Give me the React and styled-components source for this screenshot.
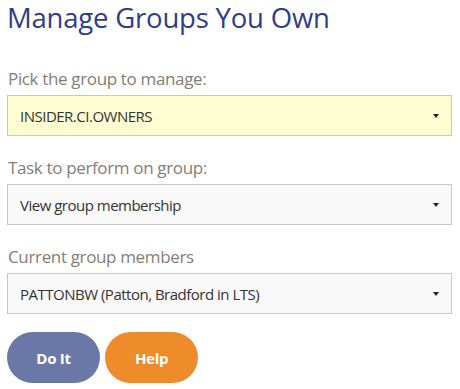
import React from 'react';
import styled, { createGlobalStyle } from 'styled-components';

const GlobalStyle = createGlobalStyle`
  body {
    margin: 0;
    background: #ffffff;
    font-family: "Open Sans", "Liberation Sans", sans-serif;
  }
`;

const Page = styled.div`
  padding: 0 8px 0 7px;
  width: 460px;
  box-sizing: border-box;
`;

const Title = styled.h1`
  margin: 0;
  padding-top: 1px;
  font-size: 27.5px;
  font-weight: 400;
  color: #2e3d8a;
  letter-spacing: -0.2px;
  line-height: 34px;
`;

const Form = styled.div`
  display: flex;
  flex-direction: column;
  margin-top: 32px;
`;

const Field = styled.div`
  display: flex;
  flex-direction: column;
  margin-bottom: 20px;
`;

const Label = styled.label`
  font-size: 17px;
  color: #857d74;
  line-height: 24px;
  margin-bottom: 4px;
  padding-left: 1px;
  letter-spacing: -0.35px;
`;

const Select = styled.div`
  height: 41px;
  box-sizing: border-box;
  border: 1px solid #c8c8c8;
  background: ${(p) => (p.$highlight ? '#fefdd1' : '#f9f9f9')};
  display: flex;
  align-items: center;
  justify-content: space-between;
  padding: 0 12px 0 12px;
  font-size: 15px;
  color: #333333;
  letter-spacing: -0.5px;
`;

const Caret = styled.span`
  width: 0;
  height: 0;
  border-left: 3px solid transparent;
  border-right: 3px solid transparent;
  border-top: 4px solid #222;
`;

const Buttons = styled.div`
  display: flex;
  gap: 5px;
  margin-top: -2px;
`;

const Button = styled.button`
  width: 93px;
  height: 51px;
  border: none;
  border-radius: 26px;
  background: ${(p) => p.$bg};
  color: #ffffff;
  font-family: "Open Sans", "Liberation Sans", sans-serif;
  font-weight: 700;
  font-size: 15px;
  letter-spacing: -0.3px;
  cursor: pointer;
`;

function App() {
  const fields = [
    { label: 'Pick the group to manage:', value: 'INSIDER.CI.OWNERS', highlight: true },
    { label: 'Task to perform on group:', value: 'View group membership' },
    { label: 'Current group members', value: 'PATTONBW (Patton, Bradford in LTS)' },
  ];

  return (
    <>
      <GlobalStyle />
      <Page>
        <Title>Manage Groups You Own</Title>
        <Form>
          {fields.map((f) => (
            <Field key={f.label}>
              <Label>{f.label}</Label>
              <Select $highlight={f.highlight}>
                <span>{f.value}</span>
                <Caret />
              </Select>
            </Field>
          ))}
          <Buttons>
            <Button $bg="#6a78a8">Do It</Button>
            <Button $bg="#ee8b2a">Help</Button>
          </Buttons>
        </Form>
      </Page>
    </>
  );
}

export default App;
